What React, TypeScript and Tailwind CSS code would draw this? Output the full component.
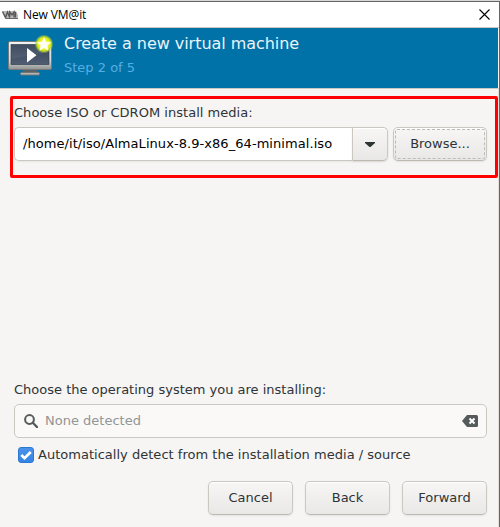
import React from 'react';

function AppGlyph() {
  return (
    <svg className="h-3 w-4 shrink-0" viewBox="0 0 16 12" fill="none">
      <path d="M0 2h14l2 4v4H4L2 7z" fill="#b9b9b9" />
      <path d="M0.5 2.500l3 6 2-5.500 2.200 5.500V3l2.300 3 2-3v5.500M13.500 3v5.500" stroke="#555" strokeWidth="1.300" />
      <path d="M4 9.500h12" stroke="#666" />
    </svg>
  );
}

function MonitorIcon() {
  return (
    <svg className="h-[44px] w-[48px] shrink-0" viewBox="0 0 48 44">
      <defs>
        <linearGradient id="screen" x1="0" y1="0" x2="0" y2="1">
          <stop offset="0" stopColor="#354256" />
          <stop offset="1" stopColor="#515d72" />
        </linearGradient>
        <linearGradient id="frame" x1="0" y1="0" x2="0" y2="1">
          <stop offset="0" stopColor="#f4f4f4" />
          <stop offset="0.7" stopColor="#d5d7d6" />
          <stop offset="1" stopColor="#8f918f" />
        </linearGradient>
        <radialGradient id="glow">
          <stop offset="0" stopColor="#ffff45" />
          <stop offset="0.65" stopColor="#e0ef18" />
          <stop offset="0.8" stopColor="#b6d52d" stopOpacity="0.8" />
          <stop offset="1" stopColor="#86bd45" stopOpacity="0" />
        </radialGradient>
      </defs>
      <rect x="0.500" y="6.500" width="43" height="28" rx="1.500" fill="url(#frame)" stroke="#777b7b" />
      <rect x="3" y="9.500" width="38" height="20" fill="url(#screen)" stroke="#27364a" strokeWidth="0.600" />
      <path d="M3 10h38v7L3 24z" fill="#fff" opacity="0.060" />
      <path d="M15 35h14l1 3H14z" fill="#596267" />
      <rect x="12.500" y="37.500" width="19" height="2.500" rx="1" fill="#b5b5b2" stroke="#737777" />
      <path d="M19 13v14.500l9.500-7.200z" fill="#fff" />
      <circle cx="36" cy="9" r="9.500" fill="url(#glow)" />
      <path d="M36 2.700l1.900 4.300 4.700.5-3.500 3.100 1 4.600-4.100-2.400-4.100 2.400 1-4.600-3.500-3.100 4.700-.5z" fill="#fffff5" stroke="#fffff5" strokeWidth="0.600" strokeLinejoin="round" />
    </svg>
  );
}

const buttonFace =
  'flex h-[34px] items-center justify-center border border-[#cdc7c2] border-b-[#bfb8b1] bg-linear-to-b from-[#f7f6f5] to-[#e9e8e6] shadow-[inset_0_1px_#fff,0_1px_2px_rgba(0,0,0,0.08)]';

function DialogButton({ label }: { label: string }) {
  return <button className={`${buttonFace} w-[85px] rounded-[5px]`}>{label}</button>;
}

export default function App() {
  return (
    <div className="relative flex h-[527px] w-[500px] flex-col overflow-hidden bg-[#f6f5f4] font-['DejaVu_Sans',sans-serif] text-[13px] leading-4 text-[#2e3436]">
      <div className="h-[2px] shrink-0 border-b border-[#666] bg-[#d8d8d8]" />
      <div className="flex min-h-0 grow flex-col border-r border-[#666]">
        <header className="flex h-[26px] shrink-0 items-center border-b border-[#cdc7c2] bg-white pr-[9px] pl-0.5">
          <AppGlyph />
          <span className="ml-[5px] font-['Open_Sans','Noto_Sans',sans-serif] text-[12px] tracking-[-0.1px] text-black">New VM@it</span>
          <svg className="ml-auto size-[11px]" viewBox="0 0 11 11" fill="none" stroke="#000" strokeWidth="1.100">
            <path d="M.5.5l10 10M10.500.5l-10 10" />
          </svg>
        </header>
        <div className="mr-px flex h-[60px] shrink-0 bg-[#0072a8] pt-[7px] pl-2">
          <MonitorIcon />
          <div className="ml-2">
            <h1 className="text-[16px] leading-[18px] tracking-[-0.04px] text-[#eaf4f9]">Create a new virtual machine</h1>
            <p className="mt-[7px] text-[#57aee3]">Step 2 of 5</p>
          </div>
        </div>
        <main className="flex grow flex-col border-t border-r border-[#cdc7c2] border-r-[#e3e0dd] px-3.5 pr-[11px]">
          <label className="mt-4 tracking-[0.03px]">Choose ISO or CDROM install media:</label>
          <div className="mt-[6px] flex gap-[5px]">
            <div className="flex h-[34px] w-[374px] rounded-[5px] shadow-[0_1px_2px_rgba(0,0,0,0.06)]">
              <div className="flex w-[338px] items-center rounded-l-[5px] border border-r-0 border-[#cdc7c2] bg-white pl-2 tracking-[0.06px] whitespace-nowrap text-black">
                /home/it/iso/AlmaLinux-8.9-x86_64-minimal.iso
              </div>
              <button className={`${buttonFace} w-9 rounded-r-[5px]`} aria-label="Show media list">
                <svg className="h-[5px] w-[10px]" viewBox="0 0 10 5"><path d="M0 0h10v1L5.500 5h-1L0 1z" fill="#2e3436" /></svg>
              </button>
            </div>
            <button className={`${buttonFace} w-[94px] rounded-[5px] p-px`}>
              <span className="flex h-full w-full items-center justify-center rounded-[2px] border border-dashed border-[#bbbab8]">Browse...</span>
            </button>
          </div>
          <label className="mt-[221px]">Choose the operating system you are installing:</label>
          <div className="mt-[6px] flex h-[34px] w-[473px] items-center rounded-[5px] border border-[#cdc7c2] bg-[#faf9f8] pr-2 pl-[9px] text-[#929595]">
            <svg className="size-[14px]" viewBox="0 0 14 14" fill="none" stroke="#555a5b">
              <circle cx="5.500" cy="5.500" r="4.400" strokeWidth="2" />
              <path d="M8.800 8.800l4.300 4.300" strokeWidth="2.300" strokeLinecap="round" />
            </svg>
            <span className="ml-[7px]">None detected</span>
            <svg className="ml-auto h-3 w-4" viewBox="0 0 16 12">
              <path d="M5 0h9.500Q16 0 16 1.500v9q0 1.500-1.500 1.500H5L0 6z" fill="#555a5b" />
              <path d="M7.500 3.500l5 5m0-5l-5 5" stroke="#fff" strokeWidth="2" />
            </svg>
          </div>
          <div className="mt-[9px] ml-1 flex items-center">
            <span className="flex size-4 items-center justify-center rounded-[3px] border border-[#2b77d4] bg-linear-to-b from-[#4a91e9] to-[#3584e4]">
              <svg className="size-[14px] shrink-0" viewBox="0 0 14 14" fill="none"><path d="M2.300 7l3.200 3.200L11.800 4" stroke="#fff" strokeWidth="2.700" /></svg>
            </span>
            <span className="ml-1 tracking-[0.02px]">Automatically detect from the installation media / source</span>
          </div>
          <footer className="mt-[18px] flex w-[473px] justify-end gap-3">
            <DialogButton label="Cancel" />
            <DialogButton label="Back" />
            <DialogButton label="Forward" />
          </footer>
        </main>
      </div>
      <div className="pointer-events-none absolute top-[96px] left-[10px] h-[82px] w-[488px] rounded-[2px] border-[3px] border-[#ff0000]" />
    </div>
  );
}
